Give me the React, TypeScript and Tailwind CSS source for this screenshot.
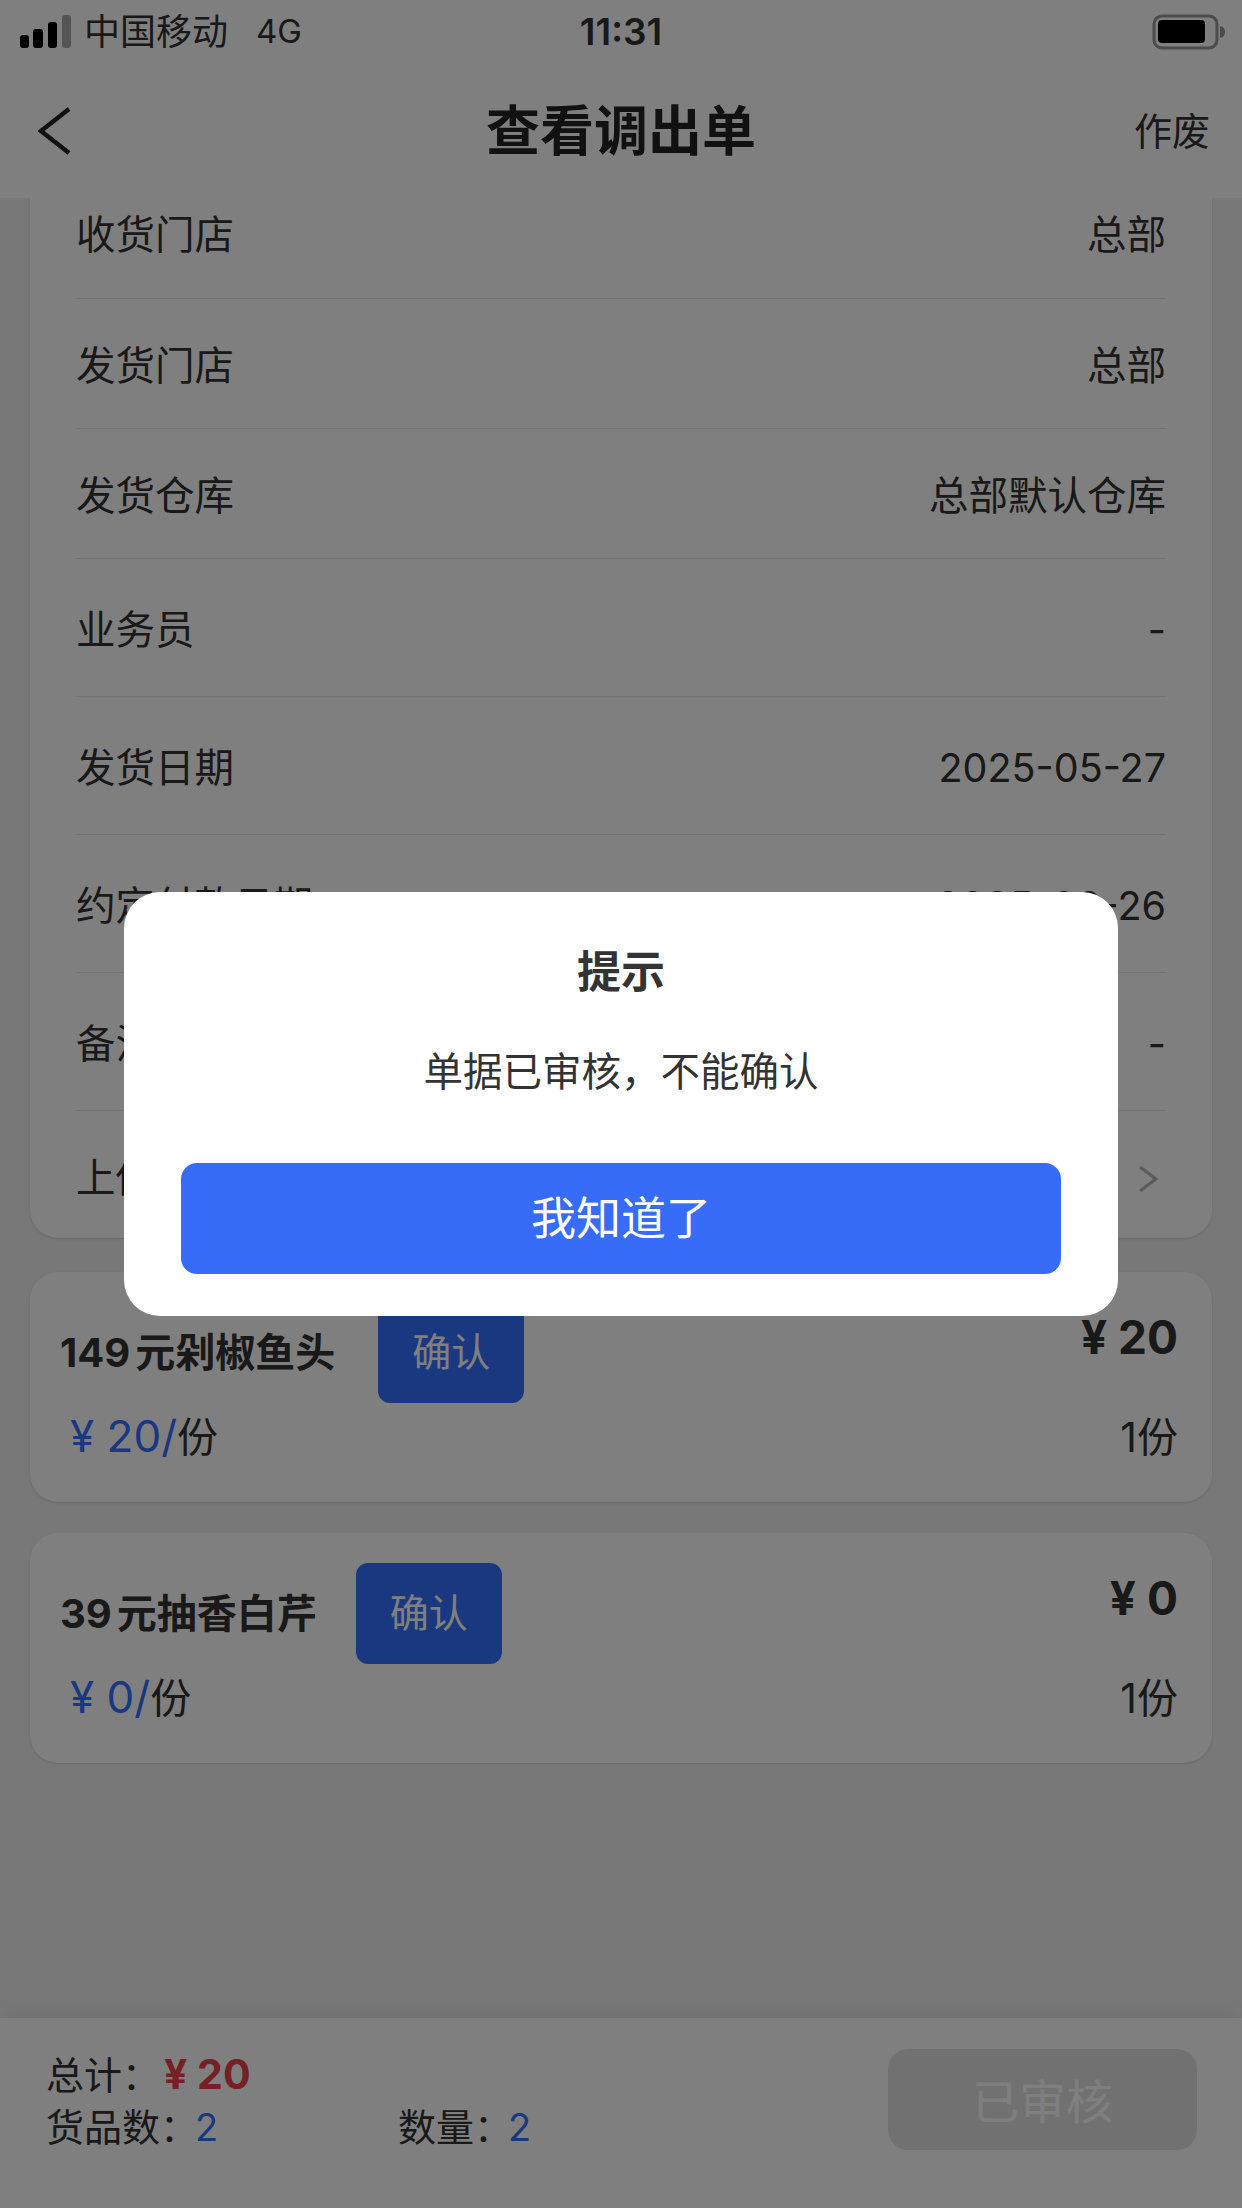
const font = "font-['Inter','Noto_Sans_CJK_SC',sans-serif]";

const rows = [
  { label: "收货门店", value: "总部", h: "h-[101px] pb-[42px]" },
  { label: "发货门店", value: "总部", h: "h-[130px] pb-[41px]" },
  { label: "发货仓库", value: "总部默认仓库", h: "h-[130px] pb-[41px]" },
  { label: "业务员", value: "-", h: "h-[138px] pb-[45px]" },
  { label: "发货日期", value: "2025-05-27", h: "h-[138px] pb-[45px]" },
  { label: "约定付款日期", value: "2025-06-26", h: "h-[138px] pb-[45px]" },
  { label: "备注", value: "-", h: "h-[138px] pb-[45px]" },
];

const items = [
  { name: "149元剁椒鱼头", price: "20", total: "¥ 20", qty: "1份", gap: "gap-[43px]" },
  { name: "39元抽香白芹", price: "0", total: "¥ 0", qty: "1份", gap: "gap-[39px]" },
];

function StatusBar() {
  return (
    <div className="relative flex h-[72px] items-center pb-[9px] pl-[20px] pr-[16px] text-[36px] text-[#333]">
      <svg width="52" height="34" viewBox="0 0 52 34" className="mr-[12px]">
        <rect x="0" y="20" width="9" height="13" rx="3" fill="#000" />
        <rect x="13" y="14" width="10" height="19" rx="3" fill="#000" />
        <rect x="28" y="7" width="9" height="26" rx="3" fill="#000" />
        <rect x="42" y="0" width="9" height="33" rx="3" fill="#aaa" />
      </svg>
      <span>中国移动</span>
      <span className="ml-[28px] text-[33px]">4G</span>
      <span className="absolute left-0 right-0 text-center text-[37px] font-semibold">11:31</span>
      <svg width="74" height="36" viewBox="0 0 74 36" className="ml-auto">
        <rect x="2" y="2" width="63" height="32" rx="8" fill="none" stroke="#999" strokeWidth="3" />
        <rect x="6" y="6" width="47" height="23" rx="4" fill="#000" />
        <path d="M68 12 C72 13 73 15 73 18 C73 21 72 23 68 24 Z" fill="#999" />
      </svg>
    </div>
  );
}

function Header() {
  return (
    <div className="relative flex h-[126px] items-center justify-between bg-white pb-[8px] pl-[38px] pr-[32px]">
      <svg width="34" height="48" viewBox="0 0 34 48" fill="none" stroke="#222" strokeWidth="4.5">
        <path d="M31 2 L3 24 L31 46" />
      </svg>
      <span className="absolute left-0 right-0 text-center text-[54px] font-bold text-[#222]">查看调出单</span>
      <span className="text-[38px] text-[#333]">作废</span>
    </div>
  );
}

function InfoCard() {
  return (
    <div className="mx-[30px] rounded-b-[28px] bg-white px-[46px] shadow-sm">
      {rows.map((row) => (
        <div key={row.label} className={`flex items-end justify-between border-b border-[#e6e6e6] text-[39.5px] leading-[42px] text-[#333] ${row.h}`}>
          <span>{row.label}</span>
          <span>{row.value}</span>
        </div>
      ))}
      <div className="flex h-[127px] items-center justify-between pt-[8px] text-[39.5px] text-[#333]">
        <span>上传附件</span>
        <svg width="22" height="28" viewBox="0 0 22 28" fill="none" stroke="#b5b5b5" strokeWidth="3" className="mr-[7px]">
          <path d="M3 2 L19 14 L3 26" />
        </svg>
      </div>
    </div>
  );
}

function ItemCard({ name, price, total, qty, gap }: { name: string; price: string; total: string; qty: string; gap: string }) {
  return (
    <div className="mx-[30px] h-[230px] rounded-[28px] bg-white pl-[30px] pr-[34px] pt-[30px] shadow-sm">
      <div className="flex items-start justify-between">
        <div className={`flex items-center ${gap}`}>
          <span className="text-[40px] font-bold text-[#333] [text-autospace:normal]">{name}</span>
          <button className="h-[101px] w-[146px] rounded-[12px] bg-[#3470ff] text-[39px] text-white">确认</button>
        </div>
        <span className="mt-[10px] text-[46px] font-bold leading-[50px] text-[#333]">{total}</span>
      </div>
      <div className="mt-[10px] flex items-center justify-between pl-[10px] text-[41px] leading-[46px] text-[#333]">
        <span>
          <span className="text-[44px] text-[#3470ff]">¥ {price}/</span>份
        </span>
        <span>{qty}</span>
      </div>
    </div>
  );
}

function Footer() {
  return (
    <div className="mt-auto flex h-[190px] justify-between bg-white pl-[46px] pr-[45px] pt-[30px] text-[38px] leading-[52px] text-[#333] shadow-[0_-8px_16px_rgba(0,0,0,0.04)]">
      <div>
        <div>
          总计：<span className="ml-[4px] text-[41px] font-bold text-[#e8404a]">¥ 20</span>
        </div>
        <div className="flex">
          <span className="w-[352px]">
            货品数：<span className="-ml-[3px] text-[#3470ff]">2</span>
          </span>
          <span>
            数量：<span className="-ml-[4px] text-[#3470ff]">2</span>
          </span>
        </div>
      </div>
      <button className="mt-[1px] h-[101px] w-[309px] rounded-[20px] bg-[#e3e3e3] pt-[4px] text-[47px] text-white">已审核</button>
    </div>
  );
}

export default function App() {
  return (
    <div className={`relative flex h-[2208px] flex-col overflow-hidden bg-[#f0f0f0] ${font}`}>
      <div className="bg-white">
        <StatusBar />
        <Header />
      </div>
      <InfoCard />
      <div className="mt-[34px] flex flex-col gap-[31px]">
        {items.map((item) => (
          <ItemCard key={item.name} {...item} />
        ))}
      </div>
      <Footer />

      <div className="absolute inset-0 flex items-center justify-center bg-black/50">
        <div className="flex h-[424px] w-[994px] flex-col items-center rounded-[36px] bg-white px-[57px] pt-[50px]">
          <div className="text-[44px] font-bold leading-[60px] text-[#333]">提示</div>
          <div className="mt-[42px] text-[39.5px] leading-[56px] text-[#333]">单据已审核，不能确认</div>
          <button className="mt-[63px] h-[111px] w-full rounded-[16px] bg-[#366cf8] text-[45px] text-white">我知道了</button>
        </div>
      </div>
    </div>
  );
}
